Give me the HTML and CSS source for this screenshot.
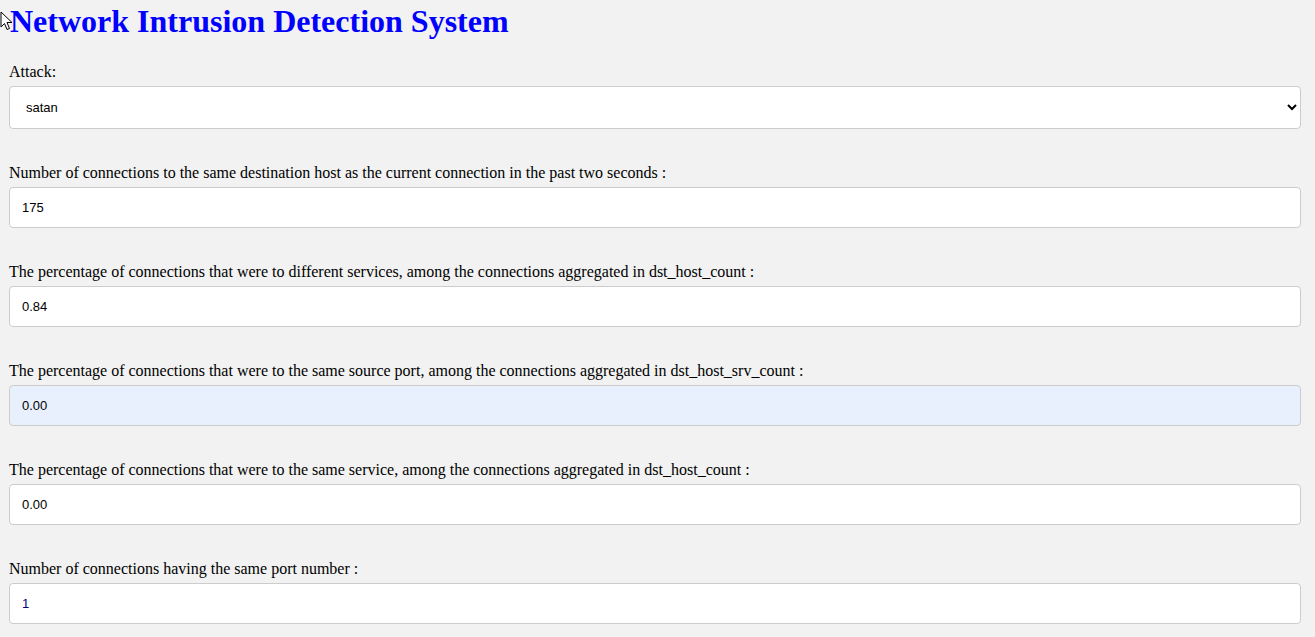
FILE: index.html
```html
<!DOCTYPE html>
<html lang="en">
<head>
<meta charset="utf-8">
<title>Network Intrusion Detection System</title>
<link rel="stylesheet" href="styles.css">
</head>
<body>
<svg class="cursor" width="13" height="20" viewBox="0 0 13 20" aria-hidden="true">
  <path d="M1 1 L1 16 L4.5 12.5 L7 18.5 L9.5 17.5 L7 11.5 L12 11.5 Z" fill="#ffffff" stroke="#000000" stroke-width="1" stroke-linejoin="miter"/>
</svg>
<h1 class="title">Network Intrusion Detection System</h1>
<form class="form">
  <div class="field">
    <label class="label" for="attack">Attack:</label>
    <select class="control select" id="attack">
      <option>satan</option>
    </select>
  </div>
  <div class="field">
    <label class="label" for="f1">Number of connections to the same destination host as the current connection in the past two seconds :</label>
    <input class="control" id="f1" type="text" value="175">
  </div>
  <div class="field">
    <label class="label" for="f2">The percentage of connections that were to different services, among the connections aggregated in dst_host_count :</label>
    <input class="control" id="f2" type="text" value="0.84">
  </div>
  <div class="field">
    <label class="label" for="f3">The percentage of connections that were to the same source port, among the connections aggregated in dst_host_srv_count :</label>
    <input class="control autofill" id="f3" type="text" value="0.00">
  </div>
  <div class="field">
    <label class="label" for="f4">The percentage of connections that were to the same service, among the connections aggregated in dst_host_count :</label>
    <input class="control" id="f4" type="text" value="0.00">
  </div>
  <div class="field">
    <label class="label" for="f5">Number of connections having the same port number :</label>
    <input class="control navy" id="f5" type="text" value="1">
  </div>
</form>
</body>
</html>
```

FILE: styles.css
```css
html, body {
  margin: 0;
  padding: 0;
  background: #f2f2f2;
  overflow: hidden;
}
body {
  position: relative;
  font-family: "Liberation Serif", "Times New Roman", serif;
  font-size: 16px;
  color: #000;
  padding: 0 14px 0 9px;
}
.cursor {
  position: absolute;
  left: 0;
  top: 11px;
  z-index: 2;
}
.title {
  margin: 0 0 0 1px;
  padding-top: 3px;
  font-size: 32px;
  font-weight: bold;
  color: #0000ff;
  line-height: 37px;
}
.form {
  display: flex;
  flex-direction: column;
  padding-top: 23px;
}
.field {
  display: flex;
  flex-direction: column;
  padding-bottom: 35px;
}
.label {
  display: block;
  font-size: 16px;
  line-height: 18px;
  margin: 0 0 5px 0;
}
.control {
  box-sizing: border-box;
  width: 100%;
  height: 41px;
  border: 1px solid #cccccc;
  border-radius: 4px;
  background: #ffffff;
  font-family: "Liberation Sans", Arial, sans-serif;
  font-size: 13px;
  padding: 0 12px;
  color: #000;
  outline: none;
}
.select {
  height: 43px;
  padding-left: 12px;
}
.autofill {
  background: #e8f0fe;
}
.navy {
  color: #000080;
}
```
